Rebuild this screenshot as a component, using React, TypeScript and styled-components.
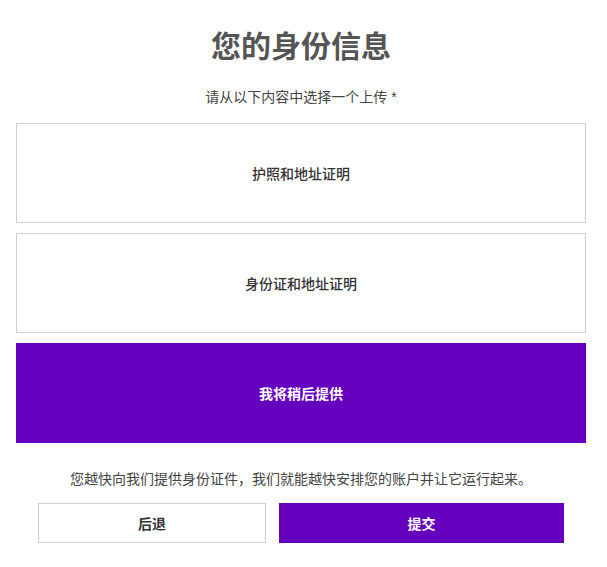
import { FC } from 'react';
import styled, { createGlobalStyle } from 'styled-components';

const GlobalStyle = createGlobalStyle`
  body {
    margin: 0;
    background: #fff;
    font-family: "Liberation Sans", "Noto Sans CJK SC", sans-serif;
  }
`;

const Page = styled.div`
  padding: 26px 21px 0 16px;
  display: flex;
  flex-direction: column;
  align-items: center;
`;

const Title = styled.h1`
  margin: 0;
  font-size: 30px;
  line-height: 42px;
  font-weight: 700;
  color: #555;
`;

const Subtitle = styled.p`
  margin: 17px 0 14px;
  font-size: 14px;
  line-height: 24px;
  color: #444;
`;

const OptionList = styled.div`
  width: 100%;
  display: flex;
  flex-direction: column;
  gap: 10px;
`;

const Option = styled.button<{ $selected?: boolean }>`
  box-sizing: border-box;
  height: 100px;
  width: 100%;
  border: 1px solid ${p => (p.$selected ? '#6600bf' : '#d0d0d0')};
  background: ${p => (p.$selected ? '#6600bf' : '#fff')};
  color: ${p => (p.$selected ? '#fff' : '#333')};
  font-family: inherit;
  font-size: 14px;
  font-weight: ${p => (p.$selected ? 700 : 500)};
  cursor: pointer;
`;

const Note = styled.p`
  margin: 24px 0 12px;
  font-size: 14px;
  line-height: 24px;
  color: #444;
`;

const Actions = styled.div`
  width: 526px;
  display: flex;
  gap: 13px;
`;

const ActionButton = styled.button<{ $primary?: boolean; $width: number }>`
  box-sizing: border-box;
  width: ${p => p.$width}px;
  height: 40px;
  border: 1px solid ${p => (p.$primary ? '#6600bf' : '#d0d0d0')};
  background: ${p => (p.$primary ? '#6600bf' : '#fff')};
  color: ${p => (p.$primary ? '#fff' : '#333')};
  font-family: inherit;
  font-size: 14px;
  font-weight: 700;
  cursor: pointer;
`;

const options = ['护照和地址证明', '身份证和地址证明', '我将稍后提供'];

const App: FC = () => {
  const selected = 2;
  return (
    <>
      <GlobalStyle />
      <Page>
        <Title>您的身份信息</Title>
        <Subtitle>请从以下内容中选择一个上传 *</Subtitle>
        <OptionList>
          {options.map((label, i) => (
            <Option key={label} $selected={i === selected}>
              {label}
            </Option>
          ))}
        </OptionList>
        <Note>您越快向我们提供身份证件，我们就能越快安排您的账户并让它运行起来。</Note>
        <Actions>
          <ActionButton $width={228}>后退</ActionButton>
          <ActionButton $width={285} $primary>
            提交
          </ActionButton>
        </Actions>
      </Page>
    </>
  );
};

export default App;
